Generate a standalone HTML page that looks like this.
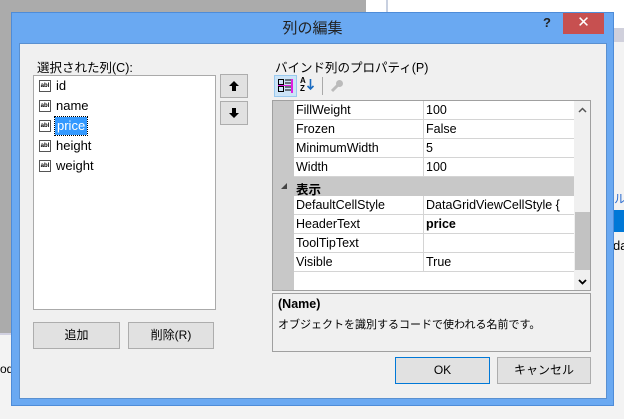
<!DOCTYPE html>
<html><head><meta charset="utf-8"><style>
*{margin:0;padding:0;box-sizing:border-box}
body{width:624px;height:419px;overflow:hidden;position:relative;background:#f3f3f3;font-family:"Liberation Sans","Noto Sans CJK JP",sans-serif;font-size:12px;color:#000}
.a{position:absolute}
.btn{position:absolute;background:#e1e1e1;border:1px solid #adadad;text-align:center;font-size:12px}
.row{position:absolute;left:0;height:19px;width:301px;font-size:12.5px}
.row .n{position:absolute;left:23px;top:2px}
.row .v{position:absolute;left:153px;top:2px}
.ln{position:absolute;left:21px;width:280px;height:1px;background:#d4d4d4}
.it{position:absolute;left:39px;height:20px;font-size:13px;line-height:20px}
.ic{position:absolute;left:0;top:4px;width:12px;height:12px;border:1px solid #555;font-size:6px;line-height:10px;text-align:center;font-weight:bold}
.tx{position:absolute;left:17px;top:0;white-space:nowrap}
</style></head><body>
<div class="a" style="left:0;top:0;width:366px;height:333px;background:#ababab"></div>
<div class="a" style="left:0;top:333px;width:19px;height:2px;background:#d0d0e0"></div>
<div class="a" style="left:366px;top:0;width:258px;height:40px;background:#fff"></div>
<div class="a" style="left:386px;top:0;width:2px;height:40px;background:#c8d0e0"></div>
<div class="a" style="left:603px;top:28px;width:21px;height:14px;background:#d0d0dc"></div>
<div class="a" style="left:614px;top:210px;width:10px;height:22px;background:#0078d7"></div>
<div class="a" style="left:614px;top:190px;color:#2a6cd0;font-size:12px">ル</div>
<div class="a" style="left:613px;top:238px;font-size:13px">da</div>
<div class="a" style="left:0;top:362px;font-size:12px">od</div>
<!-- dialog -->
<div class="a" style="left:11px;top:12px;width:603px;height:394px;background:#6aa9f2;border:1px solid #4e8cd8"></div>
<div class="a" style="left:11px;top:17px;width:603px;text-align:center;font-size:15px;color:#222">列の編集</div>
<div class="a" style="left:543px;top:15px;font-weight:bold;font-size:13px;color:#222">?</div>
<div class="a" style="left:563px;top:13px;width:41px;height:21px;background:#c75050;color:#fff;text-align:center;font-size:15px;line-height:20px">✕</div>
<div class="a" style="left:19px;top:43px;width:588px;height:356px;background:#f0f0f0;border:1px solid #5a90d0"></div>
<div class="a" style="left:37px;top:57px;font-size:12.5px">選択された列(C):</div>
<div class="a" style="left:33px;top:75px;width:183px;height:235px;background:#fff;border:1px solid #aaa"></div>
<div class="it" style="top:76px"><span class="ic">abl</span><span class="tx">id</span></div>
<div class="it" style="top:96px"><span class="ic">abl</span><span class="tx">name</span></div>
<div class="it" style="top:116px"><span class="ic">abl</span><span class="tx" style="left:16px;top:1px;line-height:18px;background:#3399ff;color:#fff;padding:0 2px;outline:1px dotted #000">price</span></div>
<div class="it" style="top:136px"><span class="ic">abl</span><span class="tx">height</span></div>
<div class="it" style="top:156px"><span class="ic">abl</span><span class="tx">weight</span></div>
<div class="btn" style="left:220px;top:74px;width:28px;height:24px"><svg width="26" height="22"><path d="M13 6l-5 5h3v5h4v-5h3z" fill="#000"/></svg></div>
<div class="btn" style="left:220px;top:101px;width:28px;height:24px"><svg width="26" height="22"><path d="M13 16l-5-5h3V6h4v5h3z" fill="#000"/></svg></div>
<div class="btn" style="left:33px;top:322px;width:87px;height:27px;line-height:25px">追加</div>
<div class="btn" style="left:128px;top:322px;width:86px;height:27px;line-height:25px">削除(R)</div>
<div class="a" style="left:275px;top:57px;font-size:12.5px">バインド列のプロパティ(P)</div>
<div class="a" style="left:274px;top:75px;width:23px;height:22px;background:#cce4f7;border:1px solid #99c9ef"></div>
<svg class="a" style="left:278px;top:79px" width="16" height="14"><rect x="0.5" y="0.5" width="5" height="5" fill="none" stroke="#000"/><rect x="0.5" y="7.5" width="5" height="5" fill="none" stroke="#000"/><path d="M7 1h6M7 4h6M7 8h6M7 11h6" stroke="#000"/><path d="M14 0v14" stroke="#e020e0" stroke-width="2"/><path d="M0 6.5h13" stroke="#e020e0"/></svg>
<div class="a" style="left:300px;top:77px;font-size:8px;font-weight:bold;line-height:8px">A<br>Z</div>
<svg class="a" style="left:307px;top:79px" width="7" height="12"><path d="M3.5 0v10M0.5 7l3 3 3-3" stroke="#1a6bc0" stroke-width="1.6" fill="none"/></svg>
<div class="a" style="left:322px;top:77px;width:1px;height:18px;background:#aaa"></div>
<svg class="a" style="left:330px;top:79px" width="14" height="14"><circle cx="9.5" cy="4.5" r="3.5" fill="#bbb"/><path d="M8 6l-6 6" stroke="#bbb" stroke-width="3"/></svg>
<div class="a" style="left:272px;top:100px;width:319px;height:191px;background:#fff;border:1px solid #a0a0a0;overflow:hidden">
<div class="a" style="left:0;top:0;width:21px;height:190px;background:#c8c8c8"></div>
<div class="a" style="left:0;top:76px;width:301px;height:19px;background:#c8c8c8"></div>
<svg class="a" style="left:8px;top:82px" width="7" height="7"><path d="M6 0v6H0z" fill="#444"/></svg>
<div class="a" style="left:23px;top:78px;font-weight:bold;font-size:12.5px">表示</div>
<div class="row" style="top:0"><span class="n">FillWeight</span><span class="v">100</span></div>
<div class="row" style="top:19px"><span class="n">Frozen</span><span class="v">False</span></div>
<div class="row" style="top:38px"><span class="n">MinimumWidth</span><span class="v">5</span></div>
<div class="row" style="top:57px"><span class="n">Width</span><span class="v">100</span></div>
<div class="row" style="top:95px"><span class="n">DefaultCellStyle</span><span class="v">DataGridViewCellStyle {</span></div>
<div class="row" style="top:114px"><span class="n">HeaderText</span><span class="v" style="font-weight:bold">price</span></div>
<div class="row" style="top:133px"><span class="n">ToolTipText</span></div>
<div class="row" style="top:152px"><span class="n">Visible</span><span class="v">True</span></div>
<div class="ln" style="top:18px"></div><div class="ln" style="top:37px"></div><div class="ln" style="top:56px"></div><div class="ln" style="top:75px"></div>
<div class="ln" style="top:113px"></div><div class="ln" style="top:132px"></div><div class="ln" style="top:151px"></div><div class="ln" style="top:170px"></div>
<div class="a" style="left:150px;top:0;width:1px;height:76px;background:#d4d4d4"></div>
<div class="a" style="left:150px;top:95px;width:1px;height:76px;background:#d4d4d4"></div>
<div class="a" style="left:301px;top:0;width:17px;height:190px;background:#f0f0f0"></div>
<div class="a" style="left:302px;top:111px;width:15px;height:58px;background:#c2c2c2"></div>
<svg class="a" style="left:305px;top:6px" width="9" height="6"><path d="M1 5l3.5-3.5L8 5" stroke="#555" stroke-width="1.5" fill="none"/></svg>
<svg class="a" style="left:305px;top:178px" width="9" height="6"><path d="M1 1l3.5 3.5L8 1" stroke="#000" stroke-width="1.8" fill="none"/></svg>
</div>
<div class="a" style="left:272px;top:293px;width:319px;height:59px;border:1px solid #a0a0a0"></div>
<div class="a" style="left:278px;top:297px;font-weight:bold;font-size:12.5px">(Name)</div>
<div class="a" style="left:278px;top:316px;font-size:11px">オブジェクトを識別するコードで使われる名前です。</div>
<div class="btn" style="left:395px;top:357px;width:95px;height:27px;line-height:25px;border-color:#0078d7">OK</div>
<div class="btn" style="left:497px;top:357px;width:94px;height:27px;line-height:25px">キャンセル</div>
</body></html>
